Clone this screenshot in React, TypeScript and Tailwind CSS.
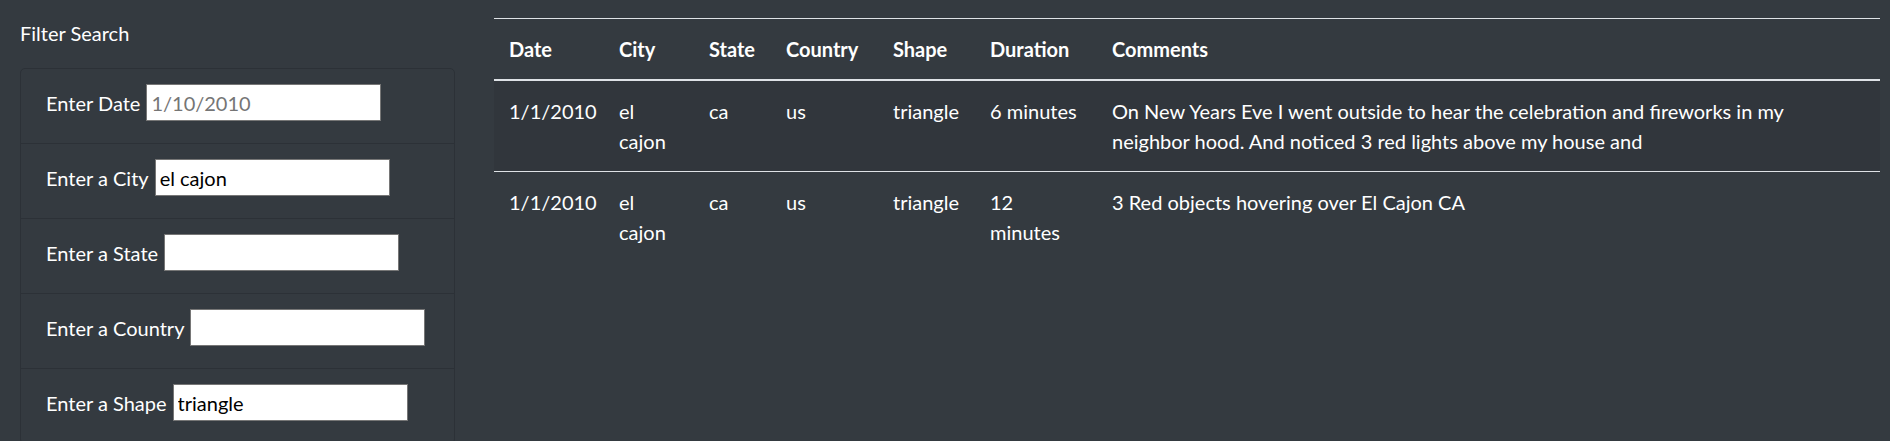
import React from "react";

const rows = [
  {
    date: "1/1/2010",
    city: "el cajon",
    state: "ca",
    country: "us",
    shape: "triangle",
    duration: "6 minutes",
    comments:
      "On New Years Eve I went outside to hear the celebration and fireworks in my neighbor hood. And noticed 3 red lights above my house and",
  },
  {
    date: "1/1/2010",
    city: "el cajon",
    state: "ca",
    country: "us",
    shape: "triangle",
    duration: "12 minutes",
    comments: "3 Red objects hovering over El Cajon CA",
  },
];

const filters = [
  { label: "Enter Date", value: "", placeholder: "1/10/2010" },
  { label: "Enter a City", value: "el cajon", placeholder: "" },
  { label: "Enter a State", value: "", placeholder: "" },
  { label: "Enter a Country", value: "", placeholder: "" },
  { label: "Enter a Shape", value: "triangle", placeholder: "" },
];

export default function App() {
  return (
    <div className="flex min-h-[441px] bg-[#343a40] font-['Lato',sans-serif] text-[20px] leading-[30px] text-white">
      <div className="ml-5 w-[435px] shrink-0">
        <div className="pt-[18px] pb-[20px]">Filter Search</div>
        <ul className="overflow-hidden rounded-[5px] border border-[#2c3137]">
          {filters.map((f, i) => (
            <li
              key={f.label}
              className={`px-[25px] pt-[15px] ${i > 0 ? "h-[75px] border-t border-[#2c3137]" : "h-[74px]"}`}
            >
              <div className="flex items-center">
                <span>{f.label}</span>
                <input
                  readOnly
                  value={f.value}
                  placeholder={f.placeholder}
                  className="ml-[6px] h-[37px] w-[235px] border border-[#767676] bg-white px-[4px] text-[20px] text-black placeholder:text-[#757575] outline-none"
                />
              </div>
            </li>
          ))}
        </ul>
      </div>
      <div className="ml-[39px] w-[1386px] shrink-0 pt-[18px]">
        <table className="w-full table-fixed border-collapse text-left">
          <thead>
            <tr className="border-t border-[#dee2e6]">
              <th className="w-[110px] border-b-2 border-[#dee2e6] p-[15px] font-bold">Date</th>
              <th className="w-[90px] border-b-2 border-[#dee2e6] p-[15px] font-bold">City</th>
              <th className="w-[77px] border-b-2 border-[#dee2e6] p-[15px] font-bold">State</th>
              <th className="w-[107px] border-b-2 border-[#dee2e6] p-[15px] font-bold">Country</th>
              <th className="w-[97px] border-b-2 border-[#dee2e6] p-[15px] font-bold">Shape</th>
              <th className="w-[122px] border-b-2 border-[#dee2e6] p-[15px] font-bold">Duration</th>
              <th className="w-[783px] border-b-2 border-[#dee2e6] p-[15px] font-bold">Comments</th>
            </tr>
          </thead>
          <tbody>
            {rows.map((r, i) => (
              <tr
                key={i}
                className={`align-top ${i > 0 ? "border-t border-[#dee2e6]" : "bg-[#31363c]"}`}
              >
                <td className="p-[15px]">{r.date}</td>
                <td className="p-[15px]">{r.city}</td>
                <td className="p-[15px]">{r.state}</td>
                <td className="p-[15px]">{r.country}</td>
                <td className="p-[15px]">{r.shape}</td>
                <td className="p-[15px]">{r.duration}</td>
                <td className="p-[15px]">{r.comments}</td>
              </tr>
            ))}
          </tbody>
        </table>
      </div>
    </div>
  );
}
